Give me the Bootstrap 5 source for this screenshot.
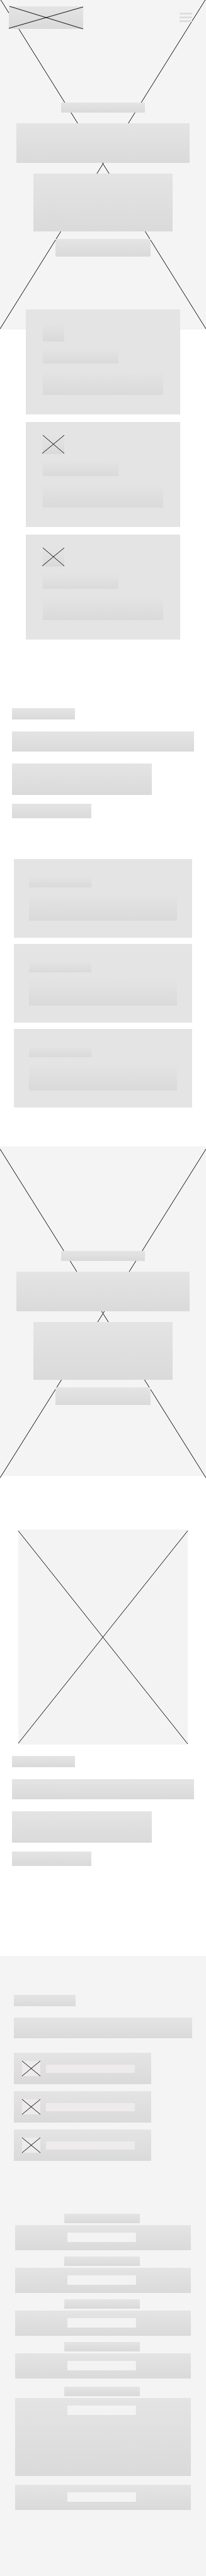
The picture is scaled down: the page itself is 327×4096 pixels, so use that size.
<!DOCTYPE html>
<html lang="en">
<head>
<meta charset="utf-8">
<meta name="viewport" content="width=device-width, initial-scale=1">
<title>Wireframe</title>
<link href="https://cdn.jsdelivr.net/npm/bootstrap@5.3.0/dist/css/bootstrap.min.css" rel="stylesheet">
<style>
  :root { --line: #111; --panel: #e4e4e4; --canvas: #f4f4f4; --fill: linear-gradient(#e4e4e4, #dadada); }
  body { font-family: "Liberation Sans", Arial, sans-serif; background: #fff; }

  .block { background: var(--fill); }
  .cross { display: block; width: 100%; height: 100%; overflow: visible; }
  .cross line { stroke: var(--line); stroke-width: 1; vector-effect: non-scaling-stroke; }

  /* Full-width banners */
  .banner { background: var(--canvas); padding-bottom: 116px; }
  .banner-copy { padding-top: 117px; }
  .banner-second { margin-top: 62px; padding-bottom: 113px; }
  .banner-second .banner-copy { padding-top: 166px; }
  .b-kicker { width: 40.4%; height: 16px; margin-bottom: 17px; }
  .b-title { width: 84%; height: 63px; margin-bottom: 17px; }
  .b-text { width: 67.6%; height: 92px; margin-bottom: 12px; }
  .b-action { width: 46.4%; height: 28px; }

  /* Top bar */
  .topbar { padding: 10px 22px 0 14px; }
  .logo { width: 118px; height: 36px; }
  .menu { width: 20px; gap: 3px; padding: 10px 0 0; }
  .menu span { height: 3px; width: 100%; }

  /* Feature cards that overlap the first banner */
  .features { margin-top: -32px; padding: 0 41px; gap: 12px; }
  .feature { background: var(--panel); padding: 22px 27px 31px; }
  .f-icon { width: 34px; height: 29px; margin-bottom: 11px; }
  .f-title { width: 63%; height: 24px; margin-bottom: 12px; }
  .f-text { height: 38px; }

  /* Text introduction */
  .intro { padding: 0 19px; }
  .intro-first { margin-top: 109px; }
  .i-kicker { width: 34.6%; height: 18px; margin-bottom: 19px; }
  .i-title { height: 32px; margin-bottom: 19px; }
  .i-text { width: 76.8%; height: 50px; margin-bottom: 14px; }
  .i-action { width: 43.6%; height: 23px; }

  /* Stacked panels */
  .services { margin-top: 65px; padding: 0 22px; gap: 10px; }
  .service { background: var(--panel); padding: 27px 24px; }
  .s-title { width: 42%; height: 18px; margin-bottom: 10px; }
  .s-text { height: 43px; }

  .photo { background: #f3f3f3; margin: 85px 29px 18px; height: 342px; }

  /* Contact */
  .contact { background: var(--canvas); margin-top: 143px; padding: 62px 22px 105px; }
  .c-kicker { width: 34.6%; height: 18px; margin-bottom: 18px; }
  .c-title { height: 33px; margin-bottom: 23px; }
  .c-list { gap: 11px; width: 77%; }
  .c-item { height: 50px; padding-left: 13px; gap: 9px; }
  .c-icon { width: 29px; height: 24px; background: #eeebec; }
  .c-label { width: 141px; height: 13px; background: #eeebec; }

  .contact-form { margin-top: 84px; padding: 0 2px; }
  .field { margin-bottom: 10px; }
  .field-message { margin: 13px 0 14px; }
  .field-name { width: 43%; height: 15px; margin: 0 0 3px 28%; }
  .entry {
    height: 40px; border: 0; border-radius: 0; resize: none;
    background: linear-gradient(#f3f3f3, #f3f3f3) 49% 12px / 39% 15px no-repeat, var(--fill);
  }
  .entry:focus { background: var(--fill); }
  .entry-tall { height: 124px; }
</style>
</head>
<body>

<section class="banner position-relative">
  <div class="position-absolute top-0 start-0 w-100 h-100 overflow-hidden">
    <svg class="cross" viewBox="0 0 327 524" preserveAspectRatio="none" aria-hidden="true"><line x1="0" y1="-2" x2="327" y2="523"/><line x1="327" y1="-2" x2="0" y2="523"/></svg>
  </div>
  <header class="topbar position-relative d-flex justify-content-between align-items-start">
    <a href="#" class="logo block d-block" aria-label="Home">
      <svg class="cross" viewBox="0 0 118 36" preserveAspectRatio="none" aria-hidden="true"><line x1="1" y1="0" x2="118" y2="36"/><line x1="0" y1="35" x2="118" y2="1"/></svg>
    </a>
    <button type="button" class="menu btn border-0 rounded-0 d-flex flex-column" aria-label="Menu">
      <span class="block"></span><span class="block"></span><span class="block"></span>
    </button>
  </header>
  <div class="banner-copy position-relative d-flex flex-column align-items-center">
    <div class="block b-kicker"></div>
    <div class="block b-title"></div>
    <div class="block b-text"></div>
    <a href="#contact" class="block b-action" aria-label="Contact"></a>
  </div>
</section>

<section class="features position-relative d-flex flex-column">
  <article class="feature">
    <div class="block f-icon"></div>
    <div class="block f-title"></div>
    <div class="block f-text"></div>
  </article>
  <article class="feature">
    <div class="block f-icon"><svg class="cross" viewBox="0 0 34 29" preserveAspectRatio="none" aria-hidden="true"><line x1="0" y1="-1" x2="34" y2="28"/><line x1="-1" y1="28" x2="34" y2="-1"/></svg></div>
    <div class="block f-title"></div>
    <div class="block f-text"></div>
  </article>
  <article class="feature">
    <div class="block f-icon"><svg class="cross" viewBox="0 0 34 29" preserveAspectRatio="none" aria-hidden="true"><line x1="0" y1="-1" x2="34" y2="28"/><line x1="-1" y1="28" x2="34" y2="-1"/></svg></div>
    <div class="block f-title"></div>
    <div class="block f-text"></div>
  </article>
</section>

<section class="intro intro-first">
  <div class="block i-kicker"></div>
  <div class="block i-title"></div>
  <div class="block i-text"></div>
  <a href="#services" class="block i-action d-block" aria-label="Services"></a>
</section>

<section class="services d-flex flex-column" id="services">
  <article class="service"><div class="block s-title"></div><div class="block s-text"></div></article>
  <article class="service"><div class="block s-title"></div><div class="block s-text"></div></article>
  <article class="service"><div class="block s-title"></div><div class="block s-text"></div></article>
</section>

<section class="banner banner-second position-relative">
  <div class="position-absolute top-0 start-0 w-100 h-100">
    <svg class="cross" viewBox="0 0 327 524" preserveAspectRatio="none" aria-hidden="true"><line x1="0" y1="4" x2="327" y2="527"/><line x1="327" y1="4" x2="0" y2="527"/></svg>
  </div>
  <div class="banner-copy position-relative d-flex flex-column align-items-center">
    <div class="block b-kicker"></div>
    <div class="block b-title"></div>
    <div class="block b-text"></div>
    <a href="#contact" class="block b-action" aria-label="Contact"></a>
  </div>
</section>

<div class="photo">
  <svg class="cross" viewBox="0 0 269 342" preserveAspectRatio="none" aria-hidden="true"><line x1="0" y1="2" x2="269" y2="341"/><line x1="0" y1="340" x2="269" y2="2"/></svg>
</div>

<section class="intro">
  <div class="block i-kicker"></div>
  <div class="block i-title"></div>
  <div class="block i-text"></div>
  <a href="#contact" class="block i-action d-block" aria-label="Contact"></a>
</section>

<section class="contact" id="contact">
  <div class="block c-kicker"></div>
  <div class="block c-title"></div>
  <ul class="c-list list-unstyled d-flex flex-column mb-0">
    <li class="c-item block d-flex align-items-center"><span class="c-icon"><svg class="cross" viewBox="0 0 29 24" preserveAspectRatio="none" aria-hidden="true"><line x1="0" y1="0" x2="29" y2="24"/><line x1="0" y1="24" x2="29" y2="0"/></svg></span><span class="c-label"></span></li>
    <li class="c-item block d-flex align-items-center"><span class="c-icon"><svg class="cross" viewBox="0 0 29 24" preserveAspectRatio="none" aria-hidden="true"><line x1="0" y1="0" x2="29" y2="24"/><line x1="0" y1="24" x2="29" y2="0"/></svg></span><span class="c-label"></span></li>
    <li class="c-item block d-flex align-items-center"><span class="c-icon"><svg class="cross" viewBox="0 0 29 24" preserveAspectRatio="none" aria-hidden="true"><line x1="0" y1="0" x2="29" y2="24"/><line x1="0" y1="24" x2="29" y2="0"/></svg></span><span class="c-label"></span></li>
  </ul>

  <form class="contact-form">
    <div class="field"><label for="name" class="field-name block d-block"></label><input id="name" type="text" class="form-control entry" aria-label="Name"></div>
    <div class="field"><label for="email" class="field-name block d-block"></label><input id="email" type="email" class="form-control entry" aria-label="Email"></div>
    <div class="field"><label for="phone" class="field-name block d-block"></label><input id="phone" type="tel" class="form-control entry" aria-label="Phone"></div>
    <div class="field mb-0"><label for="subject" class="field-name block d-block"></label><input id="subject" type="text" class="form-control entry" aria-label="Subject"></div>
    <div class="field-message"><label for="message" class="field-name block d-block"></label><textarea id="message" class="form-control entry entry-tall" aria-label="Message"></textarea></div>
    <button type="submit" class="btn entry d-block w-100" aria-label="Send"></button>
  </form>
</section>

<script src="https://cdn.jsdelivr.net/npm/bootstrap@5.3.0/dist/js/bootstrap.bundle.min.js"></script>
</body>
</html>
